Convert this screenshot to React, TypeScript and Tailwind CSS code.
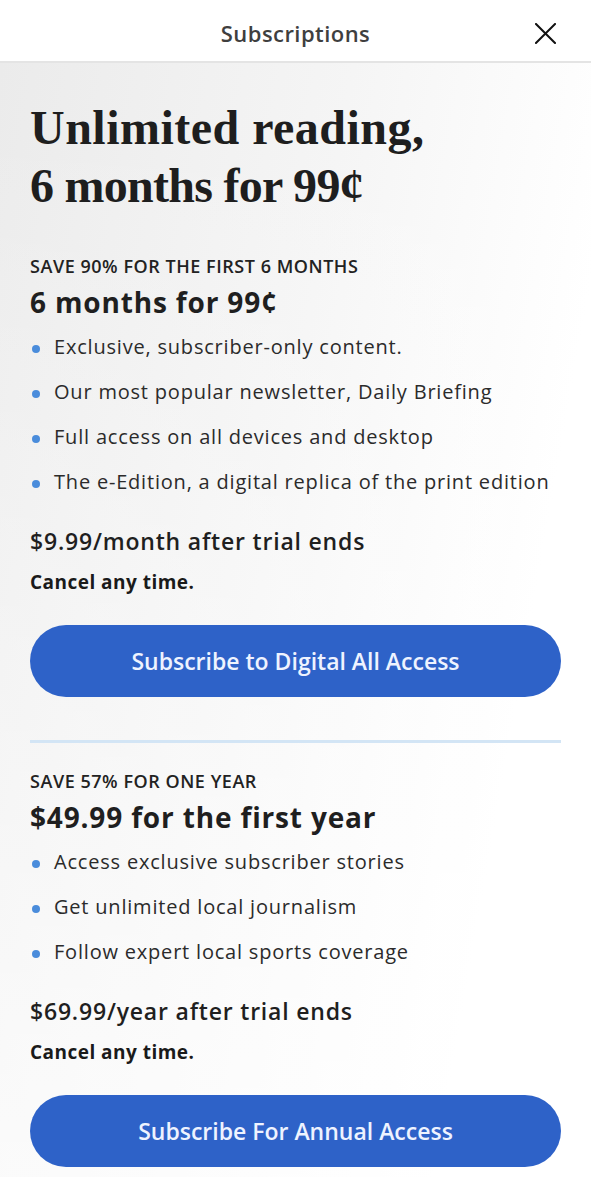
const plans = [
  {
    tag: "SAVE 90% FOR THE FIRST 6 MONTHS",
    price: "6 months for 99¢",
    perks: [
      "Exclusive, subscriber-only content.",
      "Our most popular newsletter, Daily Briefing",
      "Full access on all devices and desktop",
      "The e-Edition, a digital replica of the print edition",
    ],
    after: "$9.99/month after trial ends",
    cta: "Subscribe to Digital All Access",
  },
  {
    tag: "SAVE 57% FOR ONE YEAR",
    price: "$49.99 for the first year",
    perks: [
      "Access exclusive subscriber stories",
      "Get unlimited local journalism",
      "Follow expert local sports coverage",
    ],
    after: "$69.99/year after trial ends",
    cta: "Subscribe For Annual Access",
  },
];

const sans = { fontFamily: "'Open Sans', 'Noto Sans', sans-serif" };

function CloseIcon() {
  return (
    <svg width="21" height="21" viewBox="0 0 21 21" fill="none" stroke="#111" strokeWidth="2" strokeLinecap="square">
      <path d="M1 1L20 20M20 1L1 20" />
    </svg>
  );
}

function Plan({ plan }: { plan: (typeof plans)[number] }) {
  return (
    <section>
      <p className="text-[18px] font-semibold leading-[24px] tracking-[0.03em] text-[#222]">{plan.tag}</p>
      <h2 className="mt-[7px] text-[28px] font-bold leading-[34px] tracking-[0.03em] text-[#1f1f1f]">{plan.price}</h2>
      <ul className="mt-[5px] flex flex-col">
        {plan.perks.map((p) => (
          <li key={p} className="flex items-center h-[45px] leading-[45px] text-[20px] tracking-[0.04em] text-[#2b2b2b]">
            <span className="w-[8px] h-[8px] mt-[4px] rounded-full bg-[#4a8cdb] ml-[2px] mr-[14px] shrink-0" />
            {p}
          </li>
        ))}
      </ul>
      <p className="mt-[22px] text-[23px] font-semibold leading-[30px] tracking-[0.035em] text-[#1f1f1f]">{plan.after}</p>
      <p className="mt-[14px] text-[19px] font-bold leading-[24px] tracking-[0.025em] text-[#1a1a1a]">Cancel any time.</p>
      <button className="mt-[31px] w-full h-[72px] rounded-full bg-[#2e62c8] text-[23px] font-semibold text-[#eef3ff]">
        {plan.cta}
      </button>
    </section>
  );
}

export default function App() {
  return (
    <div className="w-[591px] min-h-[1178px] bg-white" style={sans}>
      <header className="relative h-[63px] pt-[6px] flex items-center justify-center border-b-2 border-[#e4e4e4] bg-white">
        <span className="text-[22px] font-semibold tracking-[0.02em] text-[#3f3f3f]">Subscriptions</span>
        <div className="absolute right-[35px] top-[23px]">
          <CloseIcon />
        </div>
      </header>

      {/* grey wash fades out to the right and towards the bottom */}
      <main className="bg-[linear-gradient(180deg,rgba(255,255,255,0)_5%,rgba(255,255,255,0.7)_100%),linear-gradient(100deg,#ebebeb_0%,#f5f5f5_45%,#ffffff_80%)] px-[30px] pt-[36px] pb-[10px]">
        <h1
          className="text-[48px] font-bold leading-[58px] tracking-[0.01em] text-[#1e1e1e]"
          style={{ fontFamily: "'Liberation Serif', serif" }}
        >
          Unlimited reading,
          <br />
          <span className="tracking-[-0.015em]">6 months for 99¢</span>
        </h1>

        <div className="mt-[39px]">
          <Plan plan={plans[0]} />
        </div>

        <hr className="mt-[43px] border-0 h-[3px] bg-[#d3e5f5]" />

        <div className="mt-[26px]">
          <Plan plan={plans[1]} />
        </div>
      </main>
    </div>
  );
}
